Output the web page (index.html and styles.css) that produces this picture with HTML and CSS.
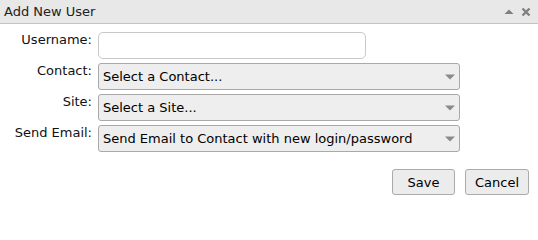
FILE: index.html
```html
<!DOCTYPE html>
<html>
<head>
<meta charset="utf-8">
<link rel="stylesheet" href="styles.css">
</head>
<body>
<div class="dialog">
  <div class="titlebar">
    <span class="title">Add New User</span>
    <span class="tools">
      <svg class="ico" width="10" height="10" viewBox="0 0 10 10"><path d="M0.5 7 L5 2.5 L9.5 7 Z" fill="#808080"/></svg>
      <svg class="ico" width="10" height="10" viewBox="0 0 10 10"><path d="M1.5 1.5 L8.5 8.5 M8.5 1.5 L1.5 8.5" stroke="#808080" stroke-width="2.4"/></svg>
    </span>
  </div>
  <div class="form">
    <label class="lbl">Username:</label>
    <div class="field"><input class="txt" type="text"></div>
    <label class="lbl">Contact:</label>
    <div class="field sel"><span class="seltext">Select a Contact...</span><svg class="arrow" width="10" height="6" viewBox="0 0 10 6"><path d="M0 0.5 H10 L5 5.5 Z" fill="#8a8a8a"/></svg></div>
    <label class="lbl">Site:</label>
    <div class="field sel"><span class="seltext">Select a Site...</span><svg class="arrow" width="10" height="6" viewBox="0 0 10 6"><path d="M0 0.5 H10 L5 5.5 Z" fill="#8a8a8a"/></svg></div>
    <label class="lbl">Send Email:</label>
    <div class="field sel"><span class="seltext">Send Email to Contact with new login/password</span><svg class="arrow" width="10" height="6" viewBox="0 0 10 6"><path d="M0 0.5 H10 L5 5.5 Z" fill="#8a8a8a"/></svg></div>
  </div>
  <div class="buttons">
    <button class="btn save">Save</button>
    <button class="btn cancel">Cancel</button>
  </div>
</div>
</body>
</html>
```
FILE: styles.css
```css
html, body {
  margin: 0;
  padding: 0;
  background: #fff;
}
body {
  font-family: "DejaVu Sans", Verdana, sans-serif;
  font-size: 13px;
  color: #000;
  width: 538px;
  height: 202px;
  overflow: hidden;
}
.titlebar {
  height: 23px;
  background: #e8e8e8;
  border-bottom: 1px solid #c3c3c3;
  display: flex;
  align-items: center;
  justify-content: space-between;
  padding: 0 7px 0 4px;
  box-sizing: content-box;
}
.title {
  font-size: 13px;
  color: #222;
  line-height: 16px;
  padding-top: 1px;
}
.tools {
  display: flex;
  align-items: center;
  gap: 7px;
}
.ico {
  display: block;
}
.form {
  display: grid;
  grid-template-columns: 92px auto;
  column-gap: 6px;
  row-gap: 4px;
  margin-top: 8px;
  justify-content: start;
}
.lbl {
  text-align: right;
  line-height: 16px;
  color: #111;
  white-space: nowrap;
}
.field {
  height: 27px;
  box-sizing: border-box;
}
.txt {
  width: 268px;
  height: 27px;
  box-sizing: border-box;
  border: 1px solid #c8c8c8;
  border-radius: 5px;
  background: #fff;
  margin: 0;
  padding: 0 4px;
  font: inherit;
  outline: none;
  display: block;
}
.sel {
  width: 362px;
  position: relative;
  border: 1px solid #a9a9a9;
  border-radius: 3px;
  background: #eeeeee;
  display: flex;
  align-items: center;
  padding-left: 4px;
}
.seltext {
  color: #000;
  white-space: nowrap;
  line-height: 16px;
  padding-top: 1px;
}
.arrow {
  position: absolute;
  right: 4px;
  top: 10px;
}
.buttons {
  display: flex;
  justify-content: flex-end;
  gap: 10px;
  padding-right: 9px;
  margin-top: 17px;
}
.btn {
  height: 26px;
  box-sizing: border-box;
  border: 1px solid #aaaaaa;
  border-radius: 3px;
  background: #ececec;
  font: inherit;
  color: #000;
  padding: 0;
  margin: 0;
}
.save { width: 63px; }
.cancel { width: 64px; }
```
